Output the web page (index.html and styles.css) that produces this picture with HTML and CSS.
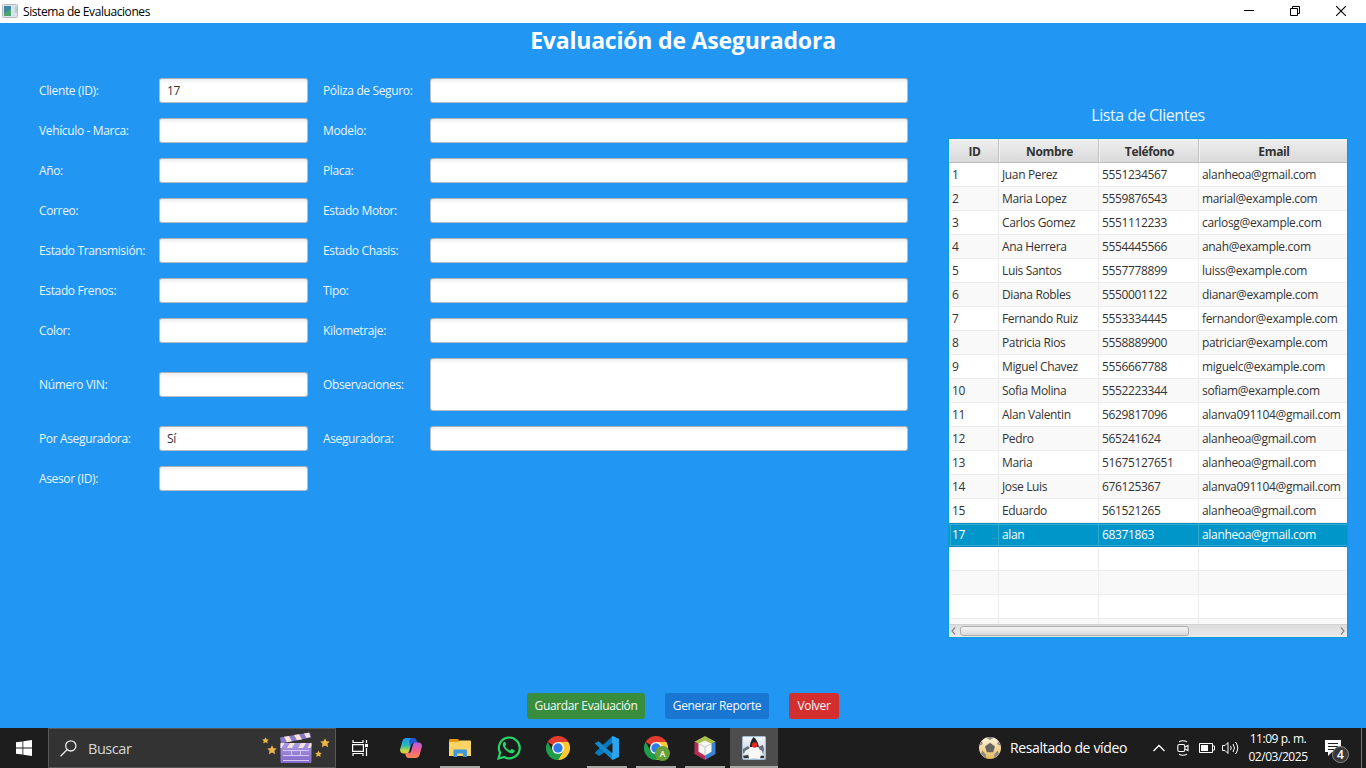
FILE: index.html
```html
<!DOCTYPE html>
<html lang="es">
<head>
<meta charset="utf-8">
<title>Sistema de Evaluaciones</title>
<link rel="stylesheet" href="styles.css">
</head>
<body>
<header class="titlebar">
  <svg class="app-icon" width="16" height="14" viewBox="0 0 16 14"><rect x=".5" y=".5" width="15" height="13" rx="1" fill="#e4e7ea" stroke="#b4b8bc"/><rect x="2" y="2" width="7" height="10" fill="#3f88a5"/><path d="M2 12V9l7-4v7z" fill="#4fa36e"/><rect x="10" y="2" width="3" height="10" fill="#d3e2ea"/><rect x="13.500" y="2" width="1" height="7" fill="#8cc0a8"/></svg>
  <span class="app-name">Sistema de Evaluaciones</span>
  <div class="win-controls">
    <svg width="10" height="10" viewBox="0 0 10 10"><path d="M0 4.500h10" stroke="#000"/></svg>
    <svg width="10" height="10" viewBox="0 0 10 10" fill="none" stroke="#000"><path d="M.5 2.500h7v7h-7zM2.500 2.500v-2h7v7h-2"/></svg>
    <svg width="10" height="10" viewBox="0 0 10 10"><path d="M0 0l10 10M10 0L0 10" stroke="#000" stroke-width="1.100"/></svg>
  </div>
</header>
<main class="app">
  <h1 class="heading">Evaluación de Aseguradora</h1>
  <div class="content">
    <form class="form">
      <label>Cliente (ID):</label><div class="field">17</div><label>Póliza de Seguro:</label><div class="field"></div>
      <label>Vehículo - Marca:</label><div class="field"></div><label>Modelo:</label><div class="field"></div>
      <label>Año:</label><div class="field"></div><label>Placa:</label><div class="field"></div>
      <label>Correo:</label><div class="field"></div><label>Estado Motor:</label><div class="field"></div>
      <label>Estado Transmisión:</label><div class="field"></div><label>Estado Chasis:</label><div class="field"></div>
      <label>Estado Frenos:</label><div class="field"></div><label>Tipo:</label><div class="field"></div>
      <label>Color:</label><div class="field"></div><label>Kilometraje:</label><div class="field"></div>
      <label>Número VIN:</label><div class="field"></div><label>Observaciones:</label><div class="field area"></div>
      <label>Por Aseguradora:</label><div class="field">Sí</div><label>Aseguradora:</label><div class="field"></div>
      <label>Asesor (ID):</label><div class="field"></div>
    </form>
    <section class="clients">
      <h2 class="list-title">Lista de Clientes</h2>
      <div class="table-box">
        <div class="rows">
        <table class="table">
          <colgroup><col class="c-id"><col class="c-name"><col class="c-phone"><col></colgroup>
          <thead><tr><th>ID</th><th>Nombre</th><th>Teléfono</th><th>Email</th></tr></thead>
          <tbody>
            <tr><td>1</td><td>Juan Perez</td><td>5551234567</td><td>alanheoa@gmail.com</td></tr>
            <tr><td>2</td><td>Maria Lopez</td><td>5559876543</td><td>marial@example.com</td></tr>
            <tr><td>3</td><td>Carlos Gomez</td><td>5551112233</td><td>carlosg@example.com</td></tr>
            <tr><td>4</td><td>Ana Herrera</td><td>5554445566</td><td>anah@example.com</td></tr>
            <tr><td>5</td><td>Luis Santos</td><td>5557778899</td><td>luiss@example.com</td></tr>
            <tr><td>6</td><td>Diana Robles</td><td>5550001122</td><td>dianar@example.com</td></tr>
            <tr><td>7</td><td>Fernando Ruiz</td><td>5553334445</td><td>fernandor@example.com</td></tr>
            <tr><td>8</td><td>Patricia Rios</td><td>5558889900</td><td>patriciar@example.com</td></tr>
            <tr><td>9</td><td>Miguel Chavez</td><td>5556667788</td><td>miguelc@example.com</td></tr>
            <tr><td>10</td><td>Sofia Molina</td><td>5552223344</td><td>sofiam@example.com</td></tr>
            <tr><td>11</td><td>Alan Valentin</td><td>5629817096</td><td>alanva091104@gmail.com</td></tr>
            <tr><td>12</td><td>Pedro</td><td>565241624</td><td>alanheoa@gmail.com</td></tr>
            <tr><td>13</td><td>Maria</td><td>51675127651</td><td>alanheoa@gmail.com</td></tr>
            <tr><td>14</td><td>Jose Luis</td><td>676125367</td><td>alanva091104@gmail.com</td></tr>
            <tr><td>15</td><td>Eduardo</td><td>561521265</td><td>alanheoa@gmail.com</td></tr>
            <tr class="selected"><td>17</td><td>alan</td><td>68371863</td><td>alanheoa@gmail.com</td></tr>
            <tr><td></td><td></td><td></td><td></td></tr>
            <tr><td></td><td></td><td></td><td></td></tr>
            <tr><td></td><td></td><td></td><td></td></tr>
            <tr><td></td><td></td><td></td><td></td></tr>
          </tbody>
        </table>
        </div>
        <div class="scroll">
          <svg width="5" height="8" viewBox="0 0 5 8"><path d="M4 .5L1 4l3 3.500" fill="none" stroke="#888" stroke-width="1.200"/></svg>
          <div class="track"><div class="thumb"></div></div>
          <svg width="5" height="8" viewBox="0 0 5 8"><path d="M1 .5L4 4 1 7.500" fill="none" stroke="#888" stroke-width="1.200"/></svg>
        </div>
      </div>
    </section>
  </div>
  <div class="actions">
    <button class="btn save">Guardar Evaluación</button>
    <button class="btn report">Generar Reporte</button>
    <button class="btn back">Volver</button>
  </div>
</main>
<footer class="taskbar">
  <svg width="0" height="0" class="defs"><defs>
    <linearGradient id="purple" x1="0" y1="0" x2="0" y2="1"><stop stop-color="#a99be6"/><stop offset="1" stop-color="#8367c8"/></linearGradient>
    <linearGradient id="cpA" x1="0" y1="0" x2="0" y2="1"><stop stop-color="#1a9bf0"/><stop offset=".5" stop-color="#30b8b0"/><stop offset=".8" stop-color="#b8d94a"/><stop offset="1" stop-color="#f5c52c"/></linearGradient>
    <linearGradient id="cpB" x1="0" y1="0" x2="0" y2="1"><stop stop-color="#b35bea"/><stop offset=".5" stop-color="#f0608c"/><stop offset="1" stop-color="#fb8b52"/></linearGradient>
    <linearGradient id="ball" x1="0" y1="0" x2="0" y2="1"><stop stop-color="#fff6df"/><stop offset="1" stop-color="#e6b95c"/></linearGradient>
    <linearGradient id="tile" x1="0" y1="0" x2="0" y2="1"><stop stop-color="#f4f7fa"/><stop offset="1" stop-color="#b5c5d6"/></linearGradient>
    <symbol id="chrome" viewBox="0 0 24 24"><path d="M12 12L1.600 6A12 12 0 0 1 22.400 6z" fill="#e33b2e"/><path d="M12 12V6h10.400A12 12 0 0 1 12 24L17.200 15z" fill="#fcc934"/><path d="M1.600 6A12 12 0 0 0 12 24l5.200-9H12L6.800 15z" fill="#1e9e4a"/><circle cx="12" cy="12" r="6" fill="#fff"/><circle cx="12" cy="12" r="4.700" fill="#3079e8"/></symbol>
    <symbol id="star" viewBox="0 0 10 10"><path d="M5 .2l1.500 3 3.300.3-2.400 2.300.8 3.500L5 7.500 1.800 9.300l.7-3.500L.2 3.500l3.300-.3z" fill="#edb544"/></symbol>
  </defs></svg>
  <div class="start"><svg width="16" height="16" viewBox="0 0 16 16" fill="#fff"><path d="M0 2.300L6.500 1.400v6.200H0zM7.300 1.300L16 0v7.600H7.300zM0 8.400h6.500v6.200L0 13.700zM7.300 8.400H16V16l-8.700-1.300z"/></svg></div>
  <div class="search">
    <svg width="17" height="17" viewBox="0 0 17 17" fill="none" stroke="#e8e8e8" stroke-width="1.300"><circle cx="10.800" cy="5.900" r="5.100"/><path d="M7.200 9.500L.6 16.200"/></svg>
    <span>Buscar</span>
    <svg class="promo" width="68" height="34" viewBox="0 0 68 34">
      <use href="#star" x="0" y="6" width="7" height="7"/><use href="#star" x="5" y="14" width="10" height="10"/><use href="#star" x="58" y="7" width="10" height="10"/><use href="#star" x="53" y="19" width="7" height="8"/>
      <path d="M18 6.500l30-5 1 5-30 6z" fill="#8879c9"/><path d="M22 5.800l5-.8 3 5.300-5 1zM32 4.100l5-.8 3 5.100-5 .9zM42 2.500l5-.8 1.500 4.200-4 1z" fill="#f4e4dc"/>
      <rect x="18.500" y="12" width="31" height="20" rx="1" fill="url(#purple)"/>
      <path d="M18.500 12h4l-3 5h-1zM28 12h5l-3 5h-5zM39 12h5l-3 5h-5zM48 12h1.500v3l-1 2h-3z" fill="#f4e4dc"/>
      <path d="M21 19.500h26M21 24.500h26M21 29.500h26M29.500 19.500v5M38.500 19.500v5" stroke="#d4c9f6"/>
    </svg>
  </div>
  <div class="tasks">
    <div class="task"><svg width="16" height="16" viewBox="0 0 16 16" fill="none" stroke="#fff" stroke-width="1.200"><path d="M1 0v2.500h10V0M1 16v-2.500h10V16M.6 4.600h10.800v6.800H.6zM14.500 0v3M14.500 8v8"/><rect x="13.600" y="4.500" width="2" height="2" fill="#fff"/></svg></div>
    <div class="task gap3"><svg width="22" height="20" viewBox="0 0 22 20"><path d="M6.500 0h7c1.500 0 2.400 1 2.800 2.400L17 5h-3.500c-1.500 0-2.200.8-2.600 2L9 13.500C8.500 15 7.500 15.500 6 15.500H3.500C1 15.500-.4 13.500.2 11L2.400 3C3 1 4.500 0 6.500 0z" fill="url(#cpA)"/><path d="M13 0c1.800 0 2.800 1 3.300 2.400L17 5h-4c-1.500 0-2 .7-2.400 2l-.5 1.500L9.400 4C9 1.500 10.500 0 13 0z" fill="#2158d2"/><path d="M15.500 20h-7c-1.500 0-2.400-1-2.800-2.400L5 15h3.500c1.500 0 2.200-.8 2.600-2L13 6.500C13.500 5 14.500 4.500 16 4.500h2.500c2.500 0 3.900 2 3.300 4.500L19.600 17c-.6 2-2.100 3-4.100 3z" fill="url(#cpB)"/></svg></div>
    <div class="task open"><svg width="22" height="18" viewBox="0 0 22 18"><path d="M0 1.500C0 .7.500 0 1.300 0H9l1.500 2H22v15H0z" fill="#e49b0e"/><path d="M0 3h9l2-1.500h9.700c.8 0 1.300.5 1.300 1.300V17H0z" fill="#fbd367"/><path d="M4.500 18v-6.300c0-.8.500-1.200 1.200-1.200h11c.8 0 1.200.5 1.200 1.200V18H14v-3.500H8.300V18z" fill="#3b99dc"/></svg></div>
    <div class="task"><svg width="24" height="24" viewBox="0 0 24 24"><path d="M1.500 22.500l1.600-5.700A10.400 10.400 0 1 1 7.200 21z" fill="none" stroke="#25d366" stroke-width="2.200"/><path d="M8.500 6.200c-.3-.6-1.500-.5-2 .2-2.300 3 1.300 7.200 4.300 9.400 3.100 2.200 6.300 2.200 6.900-.8.100-.6-.1-.8-.5-1l-2.200-1c-.6-.3-.9.100-1.300.7-.5.700-.7.800-1.300.5-2.200-1-3.300-2.300-4.100-3.800-.3-.5.300-.9.700-1.500.2-.3.200-.6 0-1z" fill="#25d366"/></svg></div>
    <div class="task"><svg width="24" height="24"><use href="#chrome"/></svg></div>
    <div class="task open"><svg width="24" height="24" viewBox="0 0 24 24"><path d="M17.500 0L24 3v4L4 20 .2 17.200C-.1 16.900 0 16.500.2 16.200z" fill="#0879c0"/><path d="M17.500 24l.5-6.500L3.500 5.200.3 6.900c-.5.300-.4.800 0 1.200z" fill="#1389d0"/><path d="M17.500 0L24 3v18l-6.500 3c-.4-.2-.5-.4-.5-1V1c0-.5.100-.8.500-1z" fill="#2ba5ef"/><path d="M17.500 7v10L11 12z" fill="#1f1f1f"/></svg></div>
    <div class="task open"><svg width="24" height="24"><use href="#chrome"/></svg><span class="avatar">A</span></div>
    <div class="task open"><svg width="22" height="24" viewBox="0 0 22 24"><path d="M11 0l10.500 5.700L11 11.500.5 5.700z" fill="#acc14d"/><path d="M.5 5.700L11 11.500V24L.5 18z" fill="#b72c57"/><path d="M21.500 5.700L11 11.500V24l10.500-6z" fill="#3981d2"/><path d="M11 4.500l6.500 3.300v8L11 19.500l-6.500-3.700v-8z" fill="#f7f8f4"/><path d="M4.500 7.800L11 11l6.500-3.200M11 11v8.500" stroke="#c3cbc2" fill="none"/></svg></div>
    <div class="task open active"><svg width="24" height="24" viewBox="0 0 24 24"><rect x=".5" y=".5" width="23" height="23" rx="1" fill="url(#tile)" stroke="#a3bdd5"/><path d="M1 13l5-3 3 3-1 4-3 1-4-1zM16 11l5-2 1 4-1 5-4-2z" fill="#69717a"/><path d="M1 20l5-1 2 3H2zM17 19l5 1v2h-6z" fill="#30353a"/><path d="M11.500 1c3 2 5 6 5.500 11H8C7.500 8 9 4 11.500 1z" fill="#23272b"/><path d="M8 11h8.500c2 4 2.500 8 1.500 12-4-1-7-1-11 0-.5-4-1-8 1-12z" fill="#f9f9f7"/><path d="M8 12l-5 3-1 3 2 1 4-2zM17 13l3 2 1 4-3 1z" fill="#eef0f0"/><circle cx="12.700" cy="9" r="2.800" fill="#e22a22"/></svg></div>
  </div>
  <div class="tray">
    <svg class="soccer" width="22" height="22" viewBox="0 0 22 22"><circle cx="11" cy="11" r="11" fill="url(#ball)"/><path d="M11 5.800l5 3.600-1.900 5.900H7.900L6 9.400z" fill="#666460"/><path d="M7 .8Q11-.9 15 .8L11 3zM.2 9l2.300-4.600L4 7zM21.800 9l-2.300-4.600L18 7zM2 17l1.300-3.500 3.400 3.700.3 4zM20 17l-1.300-3.500-3.400 3.700-.3 4z" fill="#8b8b88"/></svg>
    <span class="news">Resaltado de vídeo</span>
    <svg class="chev" width="12" height="8" viewBox="0 0 12 8"><path d="M.5 7L6 1.500 11.500 7" fill="none" stroke="#fff" stroke-width="1.300"/></svg>
    <svg class="meet" width="12" height="16" viewBox="0 0 12 16" fill="none" stroke="#fff" stroke-width="1.100"><rect x=".8" y="4.500" width="7" height="7" rx="1.500"/><path d="M8 7l3-1.500v5L8 9M2 1.700q4-2 8 0M2 14.300q4 2 8 0"/></svg>
    <svg class="battery" width="16" height="10" viewBox="0 0 16 10"><path d="M.5.500h13v9H.5zM14 3h1.500v4H14" fill="none" stroke="#fff"/><path d="M2 2h7v6H2z" fill="#fff"/></svg>
    <svg class="sound" width="17" height="14" viewBox="0 0 17 14" fill="none" stroke="#fff"><path d="M.5 4.500H3L6 1.500v11l-3-3H.5zM8.500 5q1.500 2 0 4M11 3q3 4 0 8M13.500 1q4.500 6 0 12"/></svg>
    <div class="clock"><span class="time">11:09 p. m.</span><span>02/03/2025</span></div>
    <div class="notice"><svg width="16" height="16" viewBox="0 0 16 16"><path d="M0 0h16v12H7l-4 4v-4H0z" fill="#fff"/><path d="M3 3.500h10M3 6.500h10M3 9.500h7" stroke="#202020"/></svg><span class="count">4</span></div>
  </div>
</footer>
</body>
</html>
```
FILE: styles.css
```css
* { box-sizing: border-box; }
body {
  margin: 0;
  width: 1366px;
  height: 768px;
  overflow: hidden;
  display: flex;
  flex-direction: column;
  font: 12px/16px "Open Sans", "Noto Sans", sans-serif;
  letter-spacing: -0.36px;
  background: #2196f3;
}
svg { display: block; flex: none; }

.titlebar { height: 23px; flex: none; display: flex; align-items: center; background: #fff; padding: 0 20px 2px 2px; color: #000; }
.app-name { margin-left: 5px; padding-top: 2px; letter-spacing: -0.42px; }
.win-controls { margin-left: auto; display: flex; gap: 36px; }

.app { flex: 1; min-height: 0; display: flex; flex-direction: column; background: #2196f3; }
.heading { margin: 0; height: 35px; text-align: center; color: #fff; font-size: 23px; line-height: 35px; font-weight: 700; letter-spacing: -0.2px; }
.content { display: flex; gap: 40px; padding: 0 18px 0 39px; height: 579px; flex: none; }
.form {
  display: grid;
  grid-template-columns: 105px 149px 92px 478px;
  gap: 15px;
  align-content: start;
  align-items: center;
  padding-top: 20px;
  color: #eaf5fe;
}
.form label { white-space: nowrap; }
.field { height: 25px; padding: 4px 7px; border: 1px solid #b9bcc0; border-top-color: #a9b0b7; border-radius: 3px; color: #333; background: linear-gradient(#efefef, #fff 5px); }
.area { height: 53px; }

.clients { width: 400px; }
.list-title { margin: 0; padding-top: 45px; height: 80px; text-align: center; font-size: 16px; line-height: 25px; font-weight: 400; color: #eaf5fe; letter-spacing: -0.45px; }
.table-box { height: 500px; border: 1px solid #039ed3; background: #fff; }
.rows { height: 485px; overflow: hidden; }
.table { width: 100%; table-layout: fixed; border-collapse: separate; border-spacing: 0; color: #333; }
.c-id { width: 50px; }
.c-name, .c-phone { width: 100px; }
.table th { height: 24px; padding: 2px 0 0 2px; font-weight: 700; border-right: 1px solid #c3c3c3; border-bottom: 1px solid #bdbdbd; background: linear-gradient(#efefef, #d9d9d9); box-shadow: inset 1px 1px #f3f3f3; }
.table td { height: 24px; padding: 0 0 0 3px; border-right: 1px solid #ededed; border-bottom: 1px solid #ededed; white-space: nowrap; }
.table th:last-child, .table td:last-child { border-right: 0; }
.table td:last-child { letter-spacing: -0.33px; }
.table tbody tr:nth-child(even) { background: #f9f9f9; }
.table tbody tr.selected { background: #0096c9; color: #fff; }
.table .selected td { border-bottom-color: #0086b5; border-right-color: #31abd4; box-shadow: inset 0 1px #0091c2, inset 0 2px #35add4, inset 0 -1px #35add4; }
.table .selected td:first-child { background: linear-gradient(#35add4, #35add4) 1px 1px / 1px 21px no-repeat; }
.scroll { height: 13px; display: flex; align-items: center; padding: 0 2px; background: linear-gradient(#dcdcdc, #ebebeb); border-top: 1px solid #d2d2d2; }
.track { flex: 1; padding-left: 4px; }
.thumb { width: 229px; height: 10px; border: 1px solid #adadad; border-radius: 3px; background: linear-gradient(#f4f4f4, #dadada); }

.actions { margin-top: 56px; display: flex; justify-content: center; gap: 20px; }
.btn { height: 26px; padding: 0; border: 0; border-radius: 3px; color: #f5fafc; font: inherit; letter-spacing: inherit; }
.save { width: 118px; background: #388e3c; }
.report { width: 104px; background: #1976d2; }
.back { width: 50px; background: #d32f2f; }

.taskbar { height: 40px; flex: none; display: flex; background: #1d1d1d; color: #fff; }
.defs { position: absolute; }
.start { width: 48px; display: flex; align-items: center; justify-content: center; }
.search { width: 288px; display: flex; align-items: center; padding: 0 5px 0 11px; background: #333; border: 1px solid #585858; font-size: 14.5px; color: #d6d6d6; letter-spacing: -0.45px; }
.search span { margin-left: 11px; padding-top: 2px; }
.promo { margin-left: auto; }
.tasks { display: flex; gap: 1px; }
.task { width: 48px; height: 40px; display: flex; align-items: center; justify-content: center; position: relative; }
.gap3 { margin-left: 2px; }
.open::after { content: ""; position: absolute; left: 4px; right: 4px; bottom: 0; height: 2px; background: #aaa8a4; }
.active { background: #4d4d4d; }
.active::after { left: 0; right: 0; }
.avatar { position: absolute; left: 23px; top: 18px; width: 15px; height: 15px; border-radius: 50%; background: #689f38; color: #fff; font-size: 8.5px; font-weight: 600; line-height: 15px; text-align: center; letter-spacing: 0; }
.tray { flex: 1; display: flex; align-items: center; padding-left: 201px; border-right: 1px solid #777; margin-right: 4px; }
.news { width: 118px; margin-left: 9px; font-size: 14px; white-space: nowrap; letter-spacing: -0.35px; }
.chev { margin-left: 25px; }
.meet { margin-left: 12px; }
.battery { margin-left: 10px; }
.sound { margin-left: 7px; }
.clock { width: 60px; margin-left: 9px; display: flex; flex-direction: column; align-items: center; line-height: 18px; white-space: nowrap; letter-spacing: -0.45px; }
.notice { position: relative; margin-left: 17px; }
.count { position: absolute; left: 7px; top: 6px; width: 17px; height: 17px; border: 1px solid #8a8a8a; border-radius: 50%; background: #383838; font-size: 12px; line-height: 15px; text-align: center; font-weight: 600; letter-spacing: 0; }
```
